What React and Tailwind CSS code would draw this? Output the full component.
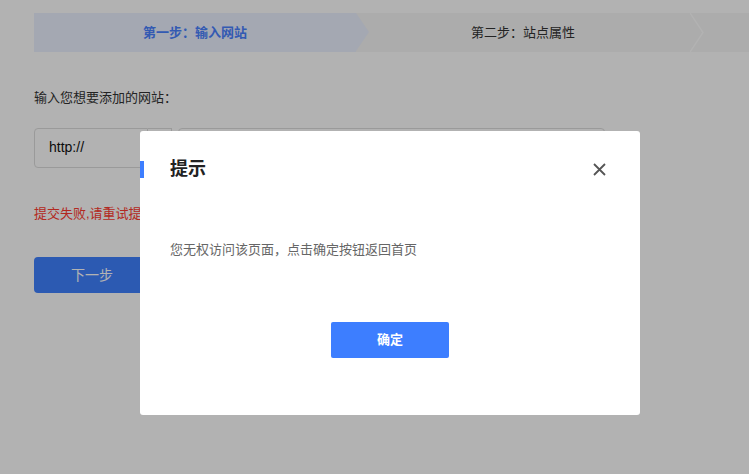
import React from "react";

export default function App() {
  return (
    <div className="relative w-[749px] h-[474px] overflow-hidden bg-white text-[13px] text-[#333]" style={{ fontFamily: '"Liberation Sans", "Noto Sans CJK SC", sans-serif' }}>
      {/* page */}
      <div className="pl-[34px] pt-[13px]">
        <div className="flex h-[39px] bg-[#f6f6f6]">
          <div className="relative w-[322px] bg-[#ebf1ff] flex items-center justify-center text-[#4a82ff] font-bold">
            第一步：输入网站
            <div className="absolute -right-[13px] top-0 w-0 h-0 border-y-[19.5px] border-y-transparent border-l-[13px] border-l-[#ebf1ff]"></div>
          </div>
          <div className="w-[334px] flex items-center justify-center text-[#333] relative">
            第二步：站点属性
            <svg className="absolute right-[-14px] top-0" width="14" height="39"><path d="M0 0 L13 19.5 L0 39" fill="none" stroke="#fff" strokeWidth="1.5" /></svg>
          </div>
        </div>
        <div className="mt-[36px]">输入您想要添加的网站：</div>
        <div className="flex mt-[20px] h-[40px]">
          <div className="w-[114px] border border-[#ddd] rounded-l flex items-center pl-[14px] text-[#111] text-[14px]">http://</div>
          <div className="w-[24px] border border-l-0 border-[#ddd]"></div>
          <div className="w-[427px] ml-[6px] border border-[#ddd] rounded"></div>
        </div>
        <div className="mt-[36px] text-[#ff3b30]">提交失败,请重试提交</div>
        <button className="mt-[34px] w-[180px] h-[36px] bg-[#4081ff] rounded text-white text-[14px] flex items-center justify-center pr-[64px]">下一步</button>
      </div>

      {/* overlay */}
      <div className="absolute inset-0 bg-black/30"></div>
      <div className="absolute left-[140px] top-[131px] w-[500px] h-[284px] bg-white rounded-[3px]">
        <div className="flex items-center mt-[30px] h-[17px]">
          <div className="w-[4px] h-[17px] bg-[#3d7eff]"></div>
          <div className="ml-[26px] text-[18px] font-bold text-[#222]">提示</div>
          <svg className="ml-auto mr-[34px]" width="13" height="13" viewBox="0 0 13 13"><path d="M1 1 L12 12 M12 1 L1 12" stroke="#555" strokeWidth="1.8" /></svg>
        </div>
        <div className="mt-[62px] pl-[30px] text-[13px] text-[#666]">您无权访问该页面，点击确定按钮返回首页</div>
        <div className="flex justify-center mt-[62px]">
          <button className="w-[118px] h-[36px] bg-[#3d7eff] rounded-[2px] text-white font-bold text-[13px]">确定</button>
        </div>
      </div>
    </div>
  );
}
